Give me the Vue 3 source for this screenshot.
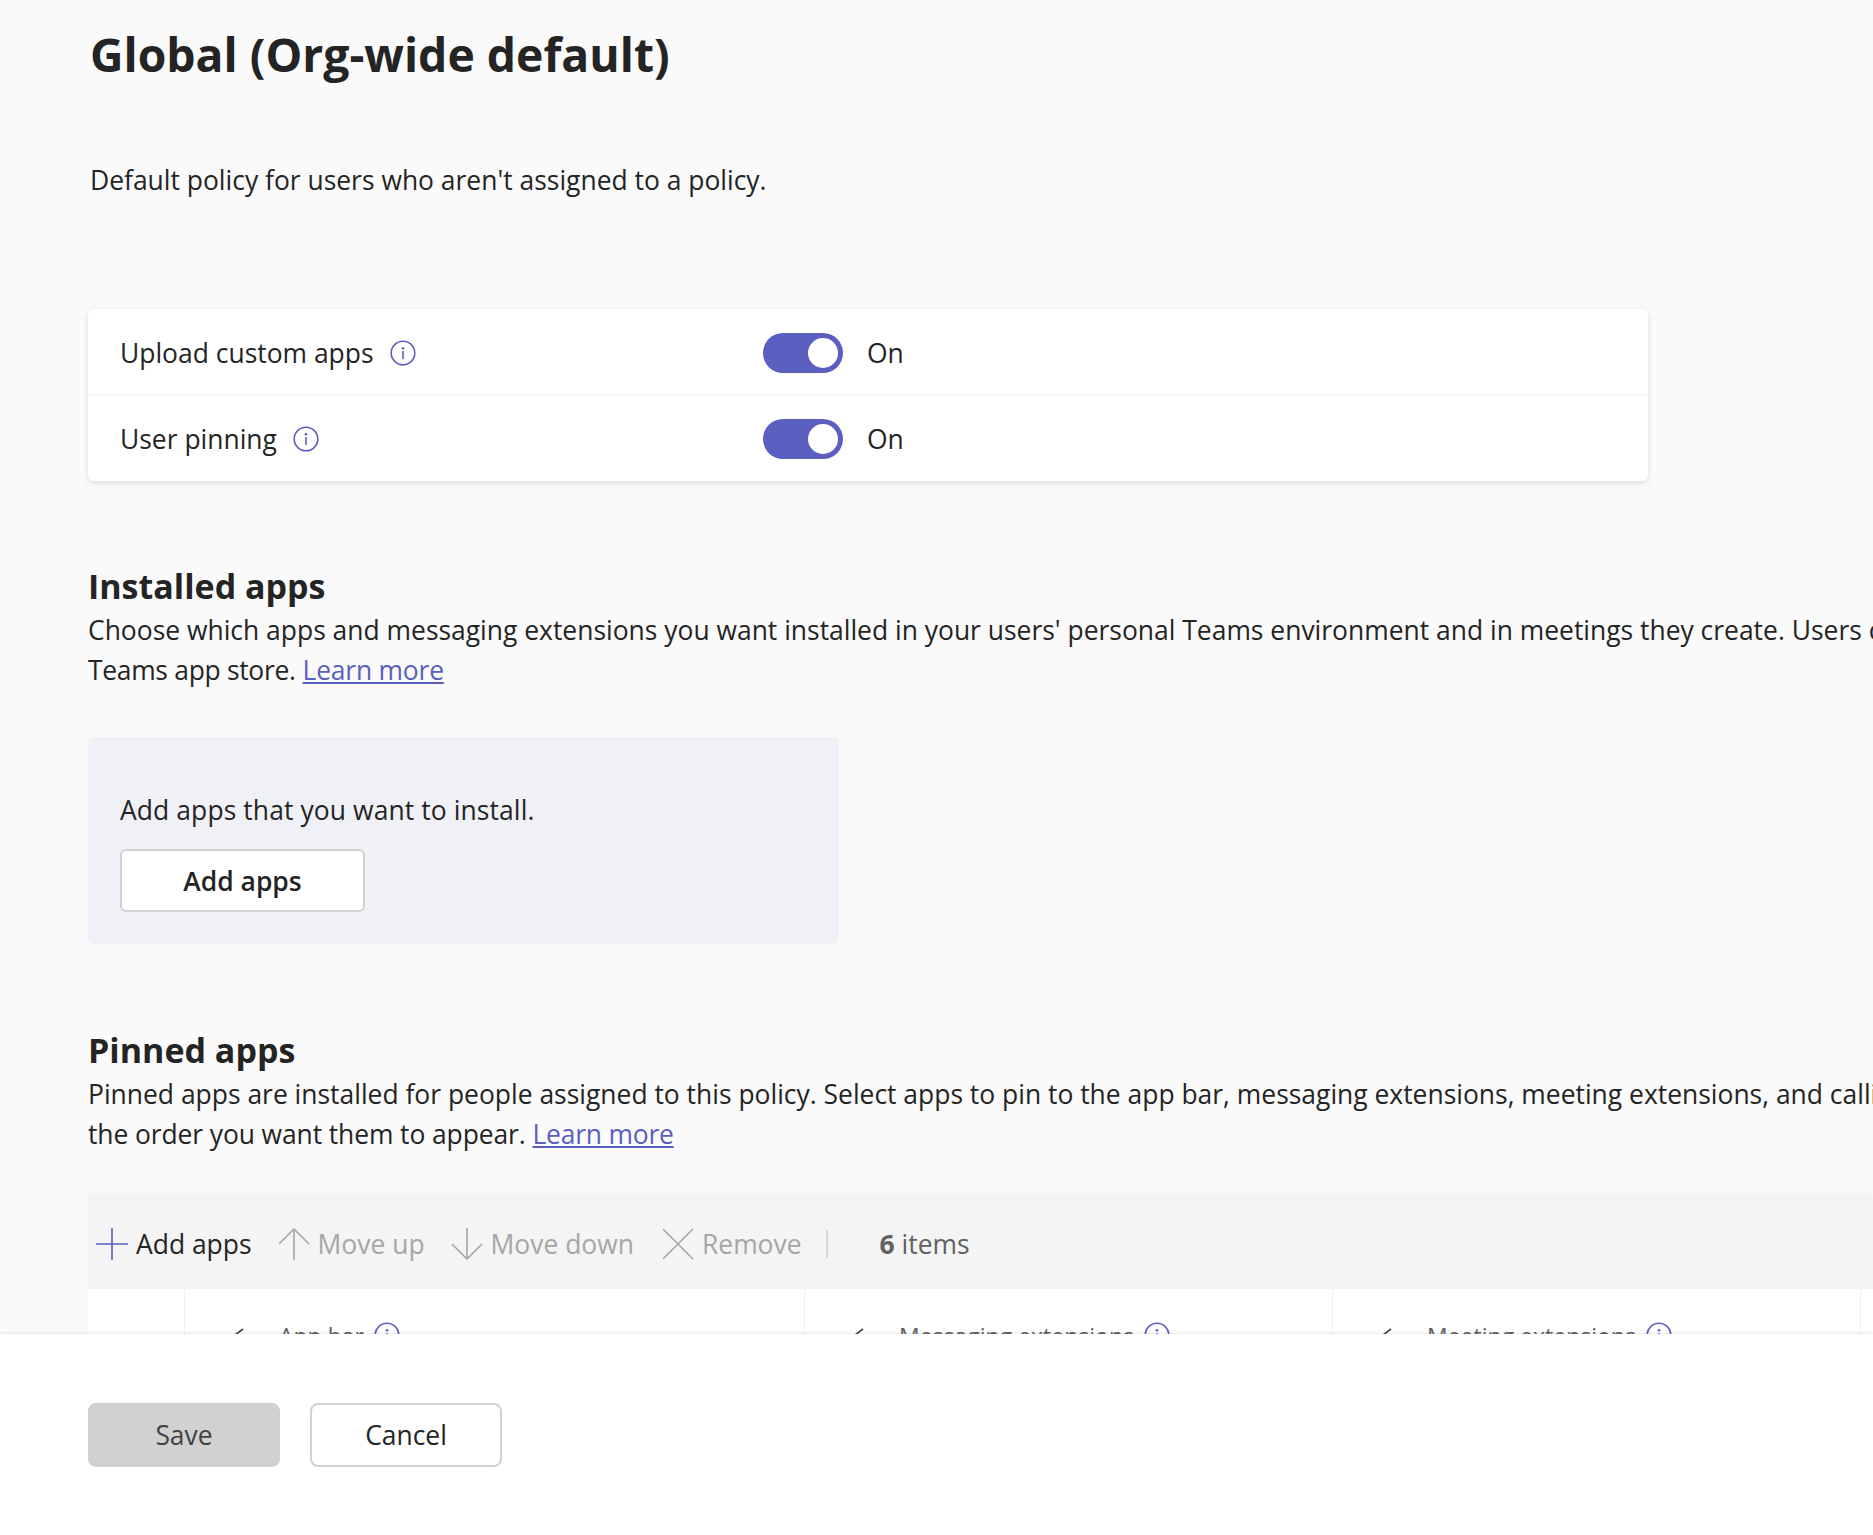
<script setup>
const rows = [
  { label: 'Upload custom apps' },
  { label: 'User pinning' }
]
const columns = [
  { label: 'App bar', cls: 'c1' },
  { label: 'Messaging extensions', cls: 'c2' },
  { label: 'Meeting extensions', cls: 'c3' }
]
</script>

<template>
  <div class="page">
    <main class="main">
      <h1 class="title">Global (Org-wide default)</h1>
      <p class="desc">Default policy for users who aren't assigned to a policy.</p>

      <section class="card">
        <div v-for="r in rows" :key="r.label" class="row">
          <div class="row-label">
            <span>{{ r.label }}</span>
            <svg class="info" viewBox="0 0 26 26"><circle cx="13" cy="13" r="11.8" fill="none" stroke="#5b5fc0" stroke-width="1.6"/><circle cx="13" cy="8.2" r="1.3" fill="#5b5fc0"/><rect x="12.2" y="11" width="1.6" height="8" fill="#5b5fc0"/></svg>
          </div>
          <div class="toggle"><span class="knob"></span></div>
          <span class="on">On</span>
        </div>
      </section>

      <h2 class="h2 h-installed">Installed apps</h2>
      <p class="body">Choose which apps and messaging extensions you want installed in your users' personal Teams environment and in meetings they create. Users can install other apps from the<br><span class="tight-a">Teams app store.</span> <a class="link">Learn more</a></p>

      <section class="panel">
        <p class="panel-text">Add apps that you want to install.</p>
        <button class="btn add">Add apps</button>
      </section>

      <h2 class="h2 h-pinned">Pinned apps</h2>
      <p class="body">Pinned apps are installed for people assigned to this policy. Select apps to pin to the app bar, messaging extensions, meeting extensions, and calling extensions, and put them in<br><span class="tight-b">the order you want them to appear.</span> <a class="link">Learn more</a></p>

      <section class="table">
        <div class="toolbar">
          <div class="tool t-add">
            <svg class="ti" viewBox="0 0 32 32"><path d="M0 16H32M16 0V32" stroke="#5b5fc0" stroke-width="1.6" fill="none"/></svg>
            <span class="tool-on">Add apps</span>
          </div>
          <div class="tool t-up">
            <svg class="ti" viewBox="0 0 32 32"><path d="M16 32V1M1 16L16 1L31 16" stroke="#a6a6a6" stroke-width="1.6" fill="none"/></svg>
            <span>Move up</span>
          </div>
          <div class="tool t-down">
            <svg class="ti" viewBox="0 0 32 32"><path d="M16 0V31M1 16L16 31L31 16" stroke="#a6a6a6" stroke-width="1.6" fill="none"/></svg>
            <span>Move down</span>
          </div>
          <div class="tool t-rem">
            <svg class="ti" viewBox="0 0 32 32"><path d="M1 1L31 31M31 1L1 31" stroke="#a6a6a6" stroke-width="1.6" fill="none"/></svg>
            <span>Remove</span>
          </div>
          <span class="sep"></span>
          <span class="count"><b>6</b> items</span>
        </div>
        <div class="thead">
          <div class="col0"></div>
          <div v-for="c in columns" :key="c.label" class="th" :class="c.cls">
            <svg class="chev" viewBox="0 0 14 14"><path d="M2 7L10 1" stroke="#424242" stroke-width="1.6" fill="none"/></svg>
            <span class="th-label">{{ c.label }}</span>
            <svg class="info" viewBox="0 0 26 26"><circle cx="13" cy="13" r="11.8" fill="none" stroke="#5b5fc0" stroke-width="1.6"/><circle cx="13" cy="8.2" r="1.3" fill="#5b5fc0"/><rect x="12.2" y="11" width="1.6" height="8" fill="#5b5fc0"/></svg>
          </div>
          <div class="th c4"></div>
        </div>
      </section>
    </main>

    <footer class="footer">
      <button class="btn save">Save</button>
      <button class="btn cancel">Cancel</button>
    </footer>
  </div>
</template>

<style scoped>
.page {
  height: 1535px;
  width: 1873px;
  display: flex;
  flex-direction: column;
  overflow: hidden;
  background: #fafafa;
  font-family: "Open Sans", "Noto Sans", sans-serif;
  color: #242424;
  font-size: 26.45px;
}
.main {
  height: 1334px;
  flex: none;
  padding-left: 88px;
  overflow: hidden;
  box-sizing: border-box;
}
.title {
  margin: 0 0 0 2px;
  padding-top: 24px;
  font-size: 46.3px;
  line-height: 62px;
  font-weight: 700;
  white-space: nowrap;
}
.desc {
  margin: 74px 0 0 2px;
  line-height: 40px;
  white-space: nowrap;
}
.card {
  margin-top: 109px;
  width: 1560px;
  height: 172px;
  background: #fff;
  border-radius: 6px;
  box-shadow: 0 2px 6px rgba(0, 0, 0, 0.12);
}
.row {
  height: 87px;
  display: flex;
  align-items: center;
  box-sizing: border-box;
  padding-left: 32px;
}
.row:first-child {
  height: 85px;
  padding-top: 3px;
}
.row + .row {
  border-top: 2px solid #f7f7f7;
}
.row-label {
  width: 643px;
  display: flex;
  align-items: center;
  gap: 16px;
}
.info {
  width: 26px;
  height: 26px;
  flex: none;
}
.toggle {
  width: 80px;
  height: 40px;
  border-radius: 20px;
  background: #5b5fc0;
  position: relative;
}
.knob {
  position: absolute;
  right: 5px;
  top: 5px;
  width: 30px;
  height: 30px;
  border-radius: 50%;
  background: #fff;
}
.on {
  margin-left: 24px;
}
.h2 {
  margin: 0;
  font-size: 34px;
  line-height: 48px;
  font-weight: 700;
}
.h-installed {
  margin-top: 81px;
}
.h-pinned {
  margin-top: 82px;
}
.body {
  margin: 0;
  line-height: 40px;
  white-space: nowrap;
}
.tight-a {
  letter-spacing: -0.3px;
}
.tight-b {
  letter-spacing: -0.1px;
}
.link {
  color: #5b5fc0;
  text-decoration: underline;
  letter-spacing: -0.2px;
}
.panel {
  margin-top: 47px;
  width: 751px;
  height: 207px;
  background: #f0f1f6;
  border-radius: 6px;
  box-sizing: border-box;
  padding: 53px 0 0 32px;
}
.panel-text {
  margin: 0;
  line-height: 40px;
  letter-spacing: 0.1px;
}
.btn {
  font: inherit;
  color: inherit;
  background: #fff;
  border: 2px solid #d1d1d1;
  border-radius: 6px;
  box-sizing: border-box;
  padding: 0;
}
.add {
  margin-top: 19px;
  width: 245px;
  height: 63px;
  font-weight: 600;
}
.table {
  margin-top: 39px;
  width: 1785px;
}
.toolbar {
  height: 96px;
  box-sizing: border-box;
  padding-top: 6px;
  background: #f4f4f4;
  display: flex;
  align-items: center;
  color: #a6a6a6;
  border-radius: 4px 4px 0 0;
}
.tool {
  display: flex;
  align-items: center;
  gap: 8px;
}
.ti {
  width: 32px;
  height: 32px;
  flex: none;
}
.tool-on {
  color: #242424;
}
.t-add { margin-left: 8px; }
.t-up { margin-left: 26px; }
.t-down { margin-left: 26px; }
.t-rem { margin-left: 28px; }
.sep {
  margin-left: 24px;
  width: 2px;
  height: 28px;
  background: #d6d6d6;
}
.count {
  margin-left: 52px;
  color: #616161;
}
.thead {
  display: flex;
  height: 60px;
  background: #fff;
}
.col0 {
  width: 96px;
  flex: none;
}
.th {
  flex: none;
  display: flex;
  align-items: flex-start;
  box-sizing: border-box;
  padding-top: 31px;
  color: #616161;
  border-left: 1px solid #f0f0f0;
  font-size: 23px;
  line-height: 32px;
}
.th .info { margin-top: 0; margin-left: 10px; position: relative; top: 2px; }
.chev {
  width: 14px;
  height: 14px;
  margin: 8px 32px 0 48px;
  flex: none;
}
.c1 { width: 620px; }
.c2 { width: 528px; }
.c3 { width: 528px; }
.c4 { width: 13px; }
.footer {
  flex: 1;
  background: #fff;
  box-shadow: 0 -1px 3px rgba(0, 0, 0, 0.1);
  position: relative;
  display: flex;
  gap: 30px;
  padding: 69px 0 0 88px;
  box-sizing: border-box;
}
.footer .btn {
  width: 192px;
  height: 64px;
  border-radius: 8px;
}
.save {
  background: #d1d1d1 !important;
  border-color: #d1d1d1 !important;
  color: #424242 !important;
}
</style>
